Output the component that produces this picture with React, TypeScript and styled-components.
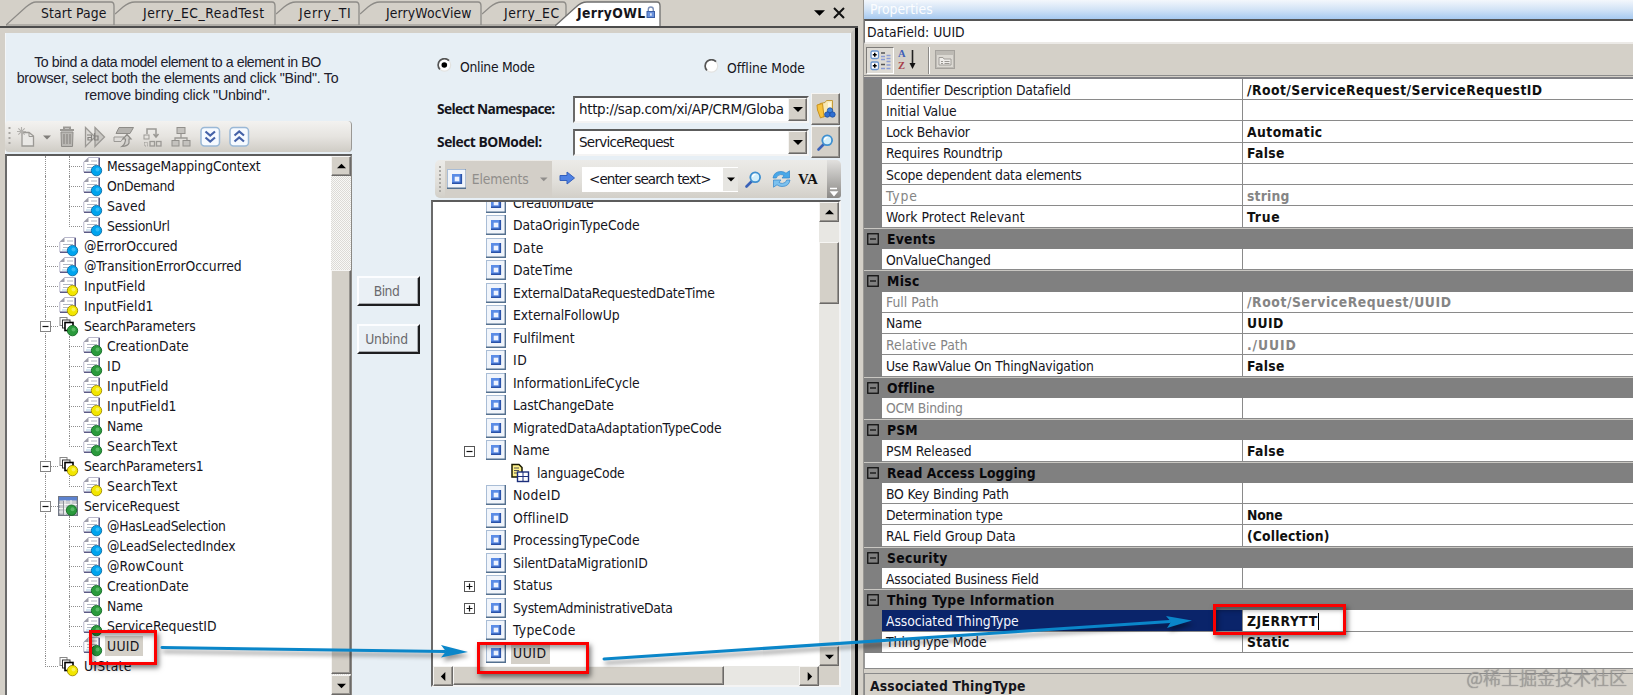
import React, { useLayoutEffect, useRef, useState } from "react";
import styled, { createGlobalStyle, css } from "styled-components";

const face = "#d4d0c8";
const canvas = "#e7eff5";

const GlobalStyle = createGlobalStyle`
  * { box-sizing: border-box; }
  body { margin: 0; background: ${face}; font: 13.8px/18px "DejaVu Sans Condensed", "DejaVu Sans", Tahoma, sans-serif; color: #15151c; }
`;

/* ---------- text that keeps to a given advance width ---------- */
const Run = styled.span<{ $bold?: boolean; $dim?: boolean }>`
  display: inline-block;
  white-space: pre;
  font-weight: ${(p) => (p.$bold ? 700 : 400)};
  ${(p) => p.$dim && "color: #858585;"}
`;

type TextProps = { children: string; w?: number; bold?: boolean; dim?: boolean };

function Text({ children, w, bold, dim }: TextProps) {
  const ref = useRef<HTMLSpanElement>(null);
  const [gap, setGap] = useState(0);
  useLayoutEffect(() => {
    if (w && ref.current) {
      const natural = ref.current.getBoundingClientRect().width;
      setGap((w + 1.6 - natural) / children.length);
    }
  }, [w, children]);
  return (
    <Run ref={ref} $bold={bold} $dim={dim} style={{ letterSpacing: gap }}>
      {children}
    </Run>
  );
}

/* ---------- frame ---------- */
const Screen = styled.div`
  position: relative;
  display: flex;
  width: 1633px;
  height: 695px;
  overflow: hidden;
  background: ${face};
`;
const Designer = styled.div`
  width: 858px;
  height: 695px;
  display: flex;
  flex-direction: column;
`;
const TabStrip = styled.div`
  display: flex;
  height: 28px;
  border-bottom: 2px solid #4c4c4c;
  padding-left: 6px;
  position: relative;
`;
const TabBox = styled.div<{ $w: number; $pad: number; $active?: boolean }>`
  position: relative;
  width: ${(p) => p.$w}px;
  height: 26px;
  padding: 4px 0 0 ${(p) => p.$pad}px;
  display: flex;
  gap: 1px;
  ${(p) => p.$active && "margin-left: -12px;"}
`;
const TabShape = styled.svg`
  position: absolute;
  inset: 0;
`;
const TabLabel = styled.div`
  position: relative;
  display: flex;
  padding-left: 1px;
`;
const StripTools = styled.div`
  display: flex;
  margin-left: auto;
  padding-right: 13px;
  gap: 8px;
  height: 25px;
  align-items: center;
`;
const Document = styled.div`
  flex: 1;
  display: flex;
  background: ${canvas};
  border-top: 5px solid ${face};
  border-left: 5px solid ${face};
  border-right: 4px solid #c4c1bb;
  box-shadow: inset 1px 0 0 #f4f6f8, inset -1px 0 0 #f4f6f8;
  margin-right: 3px;
  outline: 3px solid #060608;
  outline-offset: 0;
  clip-path: inset(0 -3px 0 0);
  min-height: 0;
`;

function Tab({ label, w, pad, tw, active }: { label: string; w: number; pad: number; tw: number; active?: boolean }) {
  const first = label === "Start Page";
  const slope = active
    ? `M0 26 L21 7 Q26 2 32 2 H${w - 4} Q${w - 1} 2 ${w - 1} 6 V26`
    : `M0 ${first ? 25 : 14} L${first ? 20 : 8} 7 Q${first ? 26 : 14} 2 ${first ? 30 : 20} 2 H${w - 4} Q${w - 1} 2 ${w - 1} 6 V25`;
  return (
    <TabBox $w={w} $pad={pad} $active={active}>
      <TabShape width={w} height={26}>
        <path d={slope} fill={active ? "#fff" : "none"} stroke={active ? "#6f6f6f" : "#8d8b87"} strokeWidth="1.3" />
        {!active && <path d={`M0 25H${w}`} stroke="#8d8b87" strokeWidth="1.2" />}
      </TabShape>
      <TabLabel>
        <Text w={tw} bold={active}>{label}</Text>
        {active && (
          <svg width="10" height="16" viewBox="0 0 10 16">
            <path d="M2.300 8V5.500a2.500 2.500 0 0 1 5 0V8" fill="none" stroke="#7b8fb8" strokeWidth="1.400" />
            <rect x="1" y="7.500" width="7.500" height="6" fill="#6a92dc" stroke="#3c5fa6" />
            <rect x="4.200" y="9.300" width="1.400" height="2.400" fill="#fff" />
          </svg>
        )}
      </TabLabel>
    </TabBox>
  );
}

/* ---------- left column ---------- */
const LeftColumn = styled.div`
  width: 347px;
  display: flex;
  flex-direction: column;
`;
const Hint = styled.div`
  height: 88px;
  padding: 21px 2px 0 0;
  display: flex;
  flex-direction: column;
  align-items: center;
  font: 14.2px/16.4px "Liberation Sans", Arial, sans-serif;
  color: #20202c;
`;
const IconBar = styled.div`
  display: flex;
  align-items: center;
  height: 31px;
  padding: 0 0 0 3px;
  border-radius: 4px;
  border-right: 1px solid #9a9894;
  background: linear-gradient(#f3f2f0, #e6e4e0 50%, #cfccc5);
`;
const IconSlot = styled.span<{ $w: number }>`
  width: ${(p) => p.$w}px;
  display: flex;
`;
const sunken = css`
  border: 2px solid #6a6a6a;
  border-top-color: #5c5c5c;
  border-right-color: #f4f4f4;
  border-bottom-color: #f4f4f4;
`;
const TreeBox = styled.div`
  ${sunken};
  border-right: 1px solid #8a8884;
  margin-top: 2px;
  flex: 1;
  display: flex;
  background: #fff;
  min-height: 0;
  border-bottom: 0;
`;
const TreeRows = styled.div`
  flex: 1;
  overflow: hidden;
`;
const LeftRow = styled.div`
  display: flex;
  align-items: center;
  height: 20px;
  padding-left: 38px;
`;
const Guide = styled.span<{ $w: number; $v?: "full" | "half"; $h?: boolean }>`
  position: relative;
  width: ${(p) => p.$w}px;
  height: 20px;
  flex: none;
  &::before {
    content: "";
    position: absolute;
    left: 0;
    top: 0;
    height: ${(p) => (p.$v === "full" ? 20 : p.$v === "half" ? 11 : 0)}px;
    border-left: 1px dotted #8e8e8e;
  }
  &::after {
    content: "";
    position: absolute;
    left: 0;
    top: 10px;
    width: ${(p) => (p.$h ? p.$w - 1 : 0)}px;
    border-top: 1px dotted #8e8e8e;
  }
`;
const ExpanderBox = styled.span`
  position: absolute;
  z-index: 1;
  left: -5px;
  top: 5px;
  display: flex;
`;
const NodeIcon = styled.span<{ $w: number }>`
  width: ${(p) => p.$w}px;
  height: 20px;
  flex: none;
  display: flex;
  svg { overflow: visible; }
`;
const NodeLabel = styled.span<{ $sel?: boolean; $h?: number }>`
  height: ${(p) => p.$h ?? 20}px;
  padding: 0 2px;
  display: flex;
  align-items: center;
  ${(p) => p.$sel && `background: ${face}; padding-right: 3px;`}
`;

function Expander({ plus, color = "#848484" }: { plus?: boolean; color?: string }) {
  return (
    <svg width="11" height="11">
      <rect x=".5" y=".5" width="10" height="10" fill="#fff" stroke={color} />
      <path d={plus ? "M2.5 5.5h6M5.5 2.5v6" : "M2.5 5.5h6"} stroke="#111" strokeWidth="1.2" />
    </svg>
  );
}

type Dot = "blue" | "green" | "yellow";
const dots: Record<Dot, [string, string, string]> = {
  blue: ["#00a4ee", "#0a6ea8", "#5fd0ff"],
  green: ["#2a9a3c", "#136a22", "#7fd08a"],
  yellow: ["#f2e600", "#a08c00", "#fffaa0"],
};

function Ball({ dot, y = 14.6 }: { dot: Dot; y?: number }) {
  const [fill, edge, glow] = dots[dot];
  return (
    <>
      <circle cx="13.500" cy={y} r="5.200" fill={fill} stroke={edge} strokeWidth=".9" />
      <circle cx="14.500" cy={y - 1} r="2" fill={glow} opacity=".55" />
    </>
  );
}

function FieldIcon({ dot }: { dot: Dot }) {
  return (
    <svg width="19" height="20">
      <path d="M5.500 1.500H16.500V16H.8V6Z" fill="#fff" stroke="#b9b8cc" />
      <path d="M16.200 2V15" stroke="#5c5a86" strokeWidth="1.600" />
      <path d="M1 16.300H13" stroke="#5c5a86" strokeWidth="1.400" />
      <path d="M5.500 1.500V6H.8Z" fill="#9d9daa" />
      <path d="M8 5h6M4 8.500h10M4 11.500h6" stroke="#b4b8c4" strokeWidth="1.100" />
      <path d="M3 14h7" stroke="#a9cfe6" strokeWidth="1" />
      <Ball dot={dot} />
    </svg>
  );
}

function NodeStackIcon({ dot }: { dot: Dot }) {
  return (
    <svg width="19" height="20">
      <rect x="1" y="1.500" width="7" height="8" fill="#fff" stroke="#888" />
      <rect x="3.500" y="4" width="7.500" height="8" fill="#fff" stroke="#333" />
      <rect x="6" y="6.500" width="8" height="8" fill="#fff" stroke="#000" strokeWidth="1.600" />
      <Ball dot={dot} y={14.600} />
    </svg>
  );
}

function TableIcon() {
  return (
    <svg width="20" height="20" viewBox="1 0 20 20">
      <rect x=".7" y=".7" width="18.6" height="18.600" fill="#c9ccd0" stroke="#707684" strokeWidth="1.4" />
      <rect x="1" y="1" width="18" height="3.4" fill="#5c82cf" />
      <path d="M1 8.5h18M1 12.500h18M1 16h18M7 4v15M13 4v15" stroke="#f5f5f5" strokeWidth="1" />
      <path d="M5.500 5v14" stroke="#8c9098" />
      <Ball dot="green" y={14.200} />
    </svg>
  );
}

type LNode = { t: string; w: number; l: 1 | 2; i: Dot; kind?: "stack" | "table"; open?: boolean; last?: boolean; sel?: boolean };
const leftNodes: LNode[] = [
  { t: "MessageMappingContext", w: 152, l: 2, i: "blue" },
  { t: "OnDemand", w: 66, l: 2, i: "blue" },
  { t: "Saved", w: 37, l: 2, i: "blue" },
  { t: "SessionUrl", w: 61, l: 2, i: "blue", last: true },
  { t: "@ErrorOccured", w: 92, l: 1, i: "blue" },
  { t: "@TransitionErrorOccurred", w: 156, l: 1, i: "blue" },
  { t: "InputField", w: 60, l: 1, i: "yellow" },
  { t: "InputField1", w: 68, l: 1, i: "yellow" },
  { t: "SearchParameters", w: 110, l: 1, i: "green", kind: "stack", open: true },
  { t: "CreationDate", w: 80, l: 2, i: "green" },
  { t: "ID", w: 13, l: 2, i: "green" },
  { t: "InputField", w: 60, l: 2, i: "yellow" },
  { t: "InputField1", w: 68, l: 2, i: "yellow" },
  { t: "Name", w: 34, l: 2, i: "green" },
  { t: "SearchText", w: 69, l: 2, i: "green", last: true },
  { t: "SearchParameters1", w: 118, l: 1, i: "yellow", kind: "stack", open: true },
  { t: "SearchText", w: 69, l: 2, i: "yellow", last: true },
  { t: "ServiceRequest", w: 94, l: 1, i: "green", kind: "table", open: true },
  { t: "@HasLeadSelection", w: 117, l: 2, i: "blue" },
  { t: "@LeadSelectedIndex", w: 127, l: 2, i: "blue" },
  { t: "@RowCount", w: 75, l: 2, i: "blue" },
  { t: "CreationDate", w: 80, l: 2, i: "green" },
  { t: "Name", w: 34, l: 2, i: "green" },
  { t: "ServiceRequestID", w: 108, l: 2, i: "green" },
  { t: "UUID", w: 31, l: 2, i: "green", last: true, sel: true },
  { t: "UIState", w: 46, l: 1, i: "yellow", kind: "stack", last: true },
];

function LeftNode({ n }: { n: LNode }) {
  return (
    <LeftRow>
      {n.l === 2 && <Guide $w={24} $v="full" />}
      <Guide $w={14} $v={n.last ? "half" : "full"} $h>
        {n.open && <ExpanderBox><Expander /></ExpanderBox>}
      </Guide>
      <NodeIcon $w={n.l === 1 ? 23 : 22}>
        {n.kind === "stack" ? <NodeStackIcon dot={n.i} /> : n.kind === "table" ? <TableIcon /> : <FieldIcon dot={n.i} />}
      </NodeIcon>
      <NodeLabel $sel={n.sel}><Text w={n.w}>{n.t}</Text></NodeLabel>
    </LeftRow>
  );
}

/* ---------- scroll bars ---------- */
const VBar = styled.div<{ $dither?: boolean }>`
  width: 20px;
  flex: none;
  display: flex;
  flex-direction: column;
  background: ${(p) => (p.$dither ? "repeating-conic-gradient(#dcdad6 0 25%, #f8f8f6 0 50%) 0 0 / 2px 2px" : "#e8e7e3")};
`;
const HBar = styled.div`
  height: 19px;
  display: flex;
  background: #e8e7e3;
`;
const raised = css`
  background: ${face};
  border: 1px solid;
  border-color: #f6f5f3 #6c6a68 #6c6a68 #f6f5f3;
  box-shadow: inset -1px -1px 0 #96938e;
`;
const ScrollBtn = styled.span`
  ${raised};
  width: 20px;
  height: 20px;
  flex: none;
  display: flex;
  align-items: center;
  justify-content: center;
`;
const VThumb = styled.span<{ $top: number; $h: number }>`
  ${raised};
  margin-top: ${(p) => p.$top}px;
  height: ${(p) => p.$h}px;
  flex: none;
`;
const HThumb = styled.span<{ $w: number }>`
  ${raised};
  width: ${(p) => p.$w}px;
`;
const ScrollCorner = styled.span`
  width: 20px;
  background: ${face};
`;
const Push = styled.span`
  flex: 1;
`;

function Tri({ dir, size = 9, color = "#000" }: { dir: "up" | "down" | "left" | "right"; size?: number; color?: string }) {
  const d = { up: "M0 7 5 2 10 7Z", down: "M0 3 5 8 10 3Z", left: "M7 0 2 5 7 10Z", right: "M3 0 8 5 3 10Z" }[dir];
  return <svg width={size} height={size} viewBox="0 0 10 10"><path d={d} fill={color} /></svg>;
}

/* ---------- binding buttons ---------- */
const BindColumn = styled.div`
  width: 79px;
  padding: 243px 0 0 5px;
  display: flex;
  flex-direction: column;
  gap: 18px;
`;
const Button = styled.button`
  width: 63px;
  height: 30px;
  padding: 0 4px 0 0;
  font: inherit;
  color: #6a6a6e;
  background: #eaf0f5;
  border: 2px solid;
  border-color: #fcfdff #1e1e20 #1e1e20 #fcfdff;
  box-shadow: inset -1px -1px 0 #a7aaae;
`;

/* ---------- browser column ---------- */
const Browser = styled.div`
  width: 416px;
  display: flex;
  flex-direction: column;
  padding-top: 25px;
`;
const Radios = styled.div`
  display: flex;
  height: 20px;
  padding-left: 6px;
`;
const Radio = styled.label<{ $w: number; $down?: boolean }>`
  display: flex;
  width: ${(p) => p.$w}px;
  gap: 8px;
  ${(p) => p.$down && "margin-top: 1px;"}
`;
const FormRow = styled.div<{ $top: number }>`
  display: flex;
  margin-top: ${(p) => p.$top}px;
  height: 32px;
  padding-left: 5px;
  align-items: center;
`;
const FormLabel = styled.div`
  width: 137px;
  padding-left: 1px;
  font-family: "Open Sans", "Noto Sans", sans-serif;
  line-height: 16px;
`;
const Combo = styled.div`
  ${sunken};
  width: 236px;
  height: 27px;
  display: flex;
  background: #fff;
  align-items: center;
  padding-left: 4px;
  font-family: "DejaVu Sans", Verdana, sans-serif;
  font-size: 13.500px;
  overflow: hidden;
`;
const DropBtn = styled.span`
  ${raised};
  margin-left: auto;
  width: 19px;
  height: 23px;
  display: flex;
  align-items: center;
  justify-content: center;
`;
const SideBtn = styled.span`
  ${raised};
  margin-left: 2px;
  width: 29px;
  height: 32px;
  display: flex;
  align-items: center;
  justify-content: center;
`;
const SearchBar = styled.div`
  display: flex;
  align-items: center;
  height: 38px;
  width: 406px;
  margin: 2px 0 0 4px;
  background: linear-gradient(#ecebe8, #e0ded9 60%, #d2cfc8);
  border-radius: 5px;
`;
const Grip = styled.span`
  width: 3px;
  margin: 0 3px 0 4px;
  border-left: 2px dotted #aaa8a4;
  height: 26px;
`;
const ElementsBtn = styled.span`
  display: flex;
  align-items: center;
  width: 107px;
  height: 36px;
  background: #d3cfc8;
  padding: 0 4px 0 2px;
  color: #908e8b;
  gap: 6px;
`;
const ArrowSlot = styled.span`
  margin-top: -2px;
  height: 16px;
  display: flex;
`;
const SearchField = styled.span`
  display: flex;
  align-items: center;
  width: 156px;
  height: 25px;
  margin: 0 7px 0 6px;
  padding-left: 7px;
  background: #fff;
  font-family: "DejaVu Sans", Verdana, sans-serif;
  font-size: 13.500px;
`;
const SearchDrop = styled.span`
  margin-left: auto;
  width: 15px;
  height: 23px;
  background: #e6e5e1;
  display: flex;
  align-items: center;
  justify-content: center;
`;
const RefreshSlot = styled.span`
  margin-left: 10px;
  display: flex;
`;
const VaLabel = styled.span`
  font: 700 15px/18px "Liberation Serif", serif;
  color: #111;
  margin-left: 7px;
`;
const Overflow = styled.span`
  margin-left: auto;
  width: 14px;
  height: 38px;
  border-radius: 0 5px 3px 0;
  background: linear-gradient(#e2e1df, #8b8986);
  display: flex;
  align-items: flex-end;
  justify-content: center;
`;
const ModelTree = styled.div`
  ${sunken};
  width: 410px;
  height: 487px;
  margin-top: 2px;
  background: #fff;
  display: flex;
  flex-direction: column;
`;
const ModelBody = styled.div`
  display: flex;
  height: 464px;
`;
const ModelRows = styled.div`
  flex: 1;
  overflow: hidden;
  height: 464px;
`;
const ModelList = styled.div`
  margin-top: -10.3px;
`;
const ModelRow = styled.div<{ $child?: boolean }>`
  height: 22.49px;
  display: flex;
  align-items: center;
  padding-left: ${(p) => (p.$child ? 78 : 31)}px;
`;
const ModelToggle = styled.span`
  width: 22px;
  display: flex;
  padding-top: 2px;
`;

function ElementIcon() {
  return (
    <svg width="20" height="20">
      <rect x=".5" y=".5" width="19" height="19" fill="#f1f5fb" stroke="#a9bdd6" />
      <path d="M0 19.300H20M19.300 0V20" stroke="#54708f" strokeWidth="1.4" />
      <rect x="5" y="5" width="10" height="10" fill="#5b8ce6" />
      <path d="M14.300 5V14.300H5" fill="none" stroke="#2a52a8" strokeWidth="1.600" />
      <rect x="7.700" y="7.700" width="4.600" height="4.600" fill="#eef3ff" />
    </svg>
  );
}

function LanguageIcon() {
  return (
    <svg width="18" height="20">
      <path d="M1 1.500H8L11 4.500V14H1Z" fill="#fdf08a" stroke="#1a1a00" strokeWidth="1.500" />
      <path d="M3 5h5M3 7.500h5M3 10h3" stroke="#555" />
      <rect x="6.500" y="9" width="11" height="9.500" fill="#fff" stroke="#1c2f7c" strokeWidth="1.400" />
      <path d="M7 13.500h10M12 9v9" stroke="#1c2f7c" />
    </svg>
  );
}

type MNode = [string, number, ("+" | "-" | "c" | "s")?];
const modelNodes: MNode[] = [
  ["CreationDate", 79], ["DataOriginTypeCode", 125], ["Date", 29], ["DateTime", 58],
  ["ExternalDataRequestedDateTime", 200], ["ExternalFollowUp", 105], ["Fulfilment", 60], ["ID", 13],
  ["InformationLifeCycle", 125], ["LastChangeDate", 99], ["MigratedDataAdaptationTypeCode", 207],
  ["Name", 35, "-"], ["languageCode", 86, "c"], ["NodeID", 46], ["OfflineID", 54],
  ["ProcessingTypeCode", 125], ["SilentDataMigrationID", 133], ["Status", 38, "+"],
  ["SystemAdministrativeData", 158, "+"], ["TypeCode", 61], ["UUID", 32, "s"],
];

function Magnifier() {
  return (
    <svg width="17" height="17" viewBox="0 0 17 17">
      <path d="M1.500 15.500 6.500 10.500" stroke="#3a62b8" strokeWidth="2.600" strokeLinecap="round" />
      <circle cx="10.200" cy="6.300" r="4.900" fill="#d3effb" stroke="#3f90d0" strokeWidth="1.800" />
      <path d="M7.500 6a3 3 0 0 1 3-2.600" stroke="#fff" strokeWidth="1.400" fill="none" />
    </svg>
  );
}

function FolderIcon() {
  return (
    <svg width="20" height="20" viewBox="0 0 20 20">
      <path d="M4 4.500 9 3.500 10.500 1.500H16.500V15L7 18Z" fill="#f8e9b4" stroke="#c49b3a" />
      <path d="M1 6 6.500 4.500 8 17.500 4.500 19 1.500 11Z" fill="#f7c23c" stroke="#c9921c" />
      <path d="M12 3.500H15V10H12Z" fill="#fff8dc" />
      <circle cx="14" cy="11.500" r="2.700" fill="#3f86e0" stroke="#1d4ea0" strokeWidth=".8" />
      <circle cx="11.300" cy="15.500" r="2.700" fill="#2f6fd2" stroke="#1d4ea0" strokeWidth=".8" />
      <circle cx="16.500" cy="15.500" r="2.700" fill="#2f6fd2" stroke="#1d4ea0" strokeWidth=".8" />
    </svg>
  );
}

function RefreshIcon() {
  return (
    <svg width="19" height="18" viewBox="0 0 19 18">
      <path d="M1 8Q2 1.5 9 1.5Q12 1.5 14 3.2L17.5.8V8H10L12 5.700Q10.500 4.500 8.500 4.600Q5 5 4.300 8Z" fill="#49a8e8" stroke="#2f84cc" strokeWidth=".7" />
      <path d="M18 10Q17 16.500 10 16.500Q7 16.500 5 14.800L1.500 17.200V10H9L7 12.300Q8.500 13.500 10.500 13.400Q14 13 14.700 10Z" fill="#7cc1ee" stroke="#2f84cc" strokeWidth=".7" />
    </svg>
  );
}

function RadioDot({ on }: { on?: boolean }) {
  return (
    <svg width="15" height="15">
      <circle cx="7.500" cy="7" r="6.200" fill="#fff" stroke="#e2e2e0" strokeWidth="1.200" />
      <path d="M2.900 11.400A6.200 6.200 0 0 1 12 2.600" fill="none" stroke="#555" strokeWidth="1.700" />
      {on && <circle cx="7.300" cy="7" r="2.800" fill="#000" />}
    </svg>
  );
}

/* ---------- toolbar drawings on the left ---------- */
const g = "#9b9995";
function NewIcon() {
  return (
    <svg width="20" height="22">
      <path d="M6 6.500H13L17.500 10V20H6Z" fill="#e9e8e5" stroke={g} strokeWidth="1.300" />
      <path d="M13 6.500V10.500H17.500" fill="none" stroke={g} />
      <path d="M5.500 1V10M1 5.500H10M2.300 2.300 8.700 8.700M8.700 2.300 2.300 8.700" stroke="#b2b0ac" strokeWidth="1.100" />
    </svg>
  );
}
function TrashIcon() {
  return (
    <svg width="16" height="22">
      <path d="M1 4H15M5 3.500V1.500H11V3.500" stroke={g} strokeWidth="2" fill="none" />
      <path d="M2 6H14L13.500 20.500H2.500Z" fill="#b9b7b3" stroke="#8e8c88" />
      <path d="M5 8V18M8 8V18M11 8V18" stroke="#8e8c88" strokeWidth="1.300" />
    </svg>
  );
}
function RenameIcon() {
  return (
    <svg width="22" height="22">
      <path d="M11 1.500 20.500 11 11 20.500Z" fill="#c9c7c3" stroke={g} strokeWidth="1.300" />
      <path d="M1.500 1.500 11 11 1.500 20.500Z" fill="#dcdad6" stroke={g} strokeWidth="1.300" />
      <path d="M3 9h4.500v5H4v-2.500h3.500M10.500 7v7h3.500v-4h-3.500" fill="none" stroke="#84827f" strokeWidth="1.200" />
    </svg>
  );
}
function ImportIcon() {
  return (
    <svg width="22" height="22">
      <path d="M6 1.500H20.500L17 7.500H3Z" fill="#b5b3af" stroke="#8e8c88" />
      <path d="M1 11H11L8 15.500H1Z" fill="#dddbd8" stroke={g} />
      <path d="M10 13 14 8.500 18 13H16V17Q15 20 9 20.500Q12.500 18 12.500 13Z" fill="#d2d0cc" stroke="#8e8c88" strokeWidth="1.200" />
    </svg>
  );
}
function MoveIcon() {
  return (
    <svg width="20" height="22">
      <path d="M4 8V3H13V10M10.500 8 13 11 15.500 8" fill="none" stroke={g} strokeWidth="1.500" />
      <rect x="1" y="9" width="5" height="4" fill="none" stroke={g} />
      <rect x="1.500" y="16.500" width="3" height="3.500" fill="none" stroke={g} strokeDasharray="1 1" />
      <rect x="7" y="15.500" width="4.500" height="4.500" fill="none" stroke={g} strokeWidth="1.300" />
      <rect x="13.500" y="15.500" width="4.500" height="4.500" fill="none" stroke={g} strokeWidth="1.300" />
    </svg>
  );
}
function OrgIcon() {
  return (
    <svg width="20" height="22">
      <path d="M10 8V12M4 15V12H16V15" fill="none" stroke={g} strokeWidth="1.300" />
      <rect x="6" y="1.500" width="8" height="6" fill="#c4c2be" stroke="#92908c" />
      <rect x="1" y="14.500" width="7" height="5.500" fill="#c4c2be" stroke="#92908c" />
      <rect x="12" y="14.500" width="7" height="5.500" fill="#c4c2be" stroke="#92908c" />
    </svg>
  );
}
function ChevronsIcon({ up }: { up?: boolean }) {
  return (
    <svg width="21" height="22">
      <rect x="1" y="1.500" width="18.500" height="18.500" rx="3.500" fill="#f6faff" stroke="#9ab8d6" strokeWidth="1.500" />
      <path d={up ? "M5.500 9.500 10.200 5.500 15 9.500M5.500 15.500 10.200 11.500 15 15.500" : "M5.500 5.500 10.200 9.500 15 5.500M5.500 11.500 10.200 15.500 15 11.500"} fill="none" stroke="#4562a8" strokeWidth="2.200" />
    </svg>
  );
}

/* ---------- property panel ---------- */
const Divider = styled.div`
  width: 5px;
  background: ${face};
`;
const Panel = styled.div`
  flex: 1;
  display: flex;
  flex-direction: column;
  border-left: 1px solid #9a9894;
`;
const PanelTitle = styled.div`
  height: 19px;
  padding: 0 0 0 6px;
  line-height: 18px;
  color: #fbfdff;
  background: linear-gradient(#f3f7fc, #d2e3f6 50%, #a6c9f0);
`;
const ObjectCombo = styled.div`
  height: 25px;
  border-top: 2px solid #555;
  border-bottom: 2px solid #eceae7;
  border-left: 1px solid #777;
  background: #fff;
  padding-left: 2px;
  line-height: 23px;
`;
const PanelTools = styled.div`
  display: flex;
  align-items: center;
  height: 31px;
  padding: 2px 0 0 2px;
`;
const Pressed = styled.span`
  width: 28px;
  height: 27px;
  border: 1px solid;
  border-color: #7d7b78 #fff #fff #7d7b78;
  background: #dedbd5;
  display: flex;
  align-items: center;
  justify-content: center;
`;
const SortIcon = styled.span`
  display: flex;
  align-items: center;
  margin-left: 4px;
  gap: 2px;
`;
const SortLetters = styled.span`
  display: flex;
  flex-direction: column;
  font: 700 10.500px/12px "Liberation Serif", serif;
  b { color: #3f5fb8; }
  i { color: #a8404a; font-style: normal; }
`;
const ToolGap = styled.span`
  width: 7px;
  height: 27px;
  margin-left: 11px;
  border-left: 1px solid #8c8a87;
  box-shadow: inset 1px 0 0 #fff;
`;
const Grid = styled.div`
  height: 579px;
  border-top: 1px solid #8b8b8b;
  padding-top: 1px;
  background: ${face};
  display: flex;
  flex-direction: column;
`;
const GridRows = styled.div`
  flex: 1;
  display: grid;
  grid-template-rows: repeat(27, minmax(0, 1fr));
  background: #808080;
  border-top: 2px solid #808085;
`;
const Item = styled.div`
  display: grid;
  grid-template-columns: 361px 1fr;
  margin-left: 18px;
  background: #fff;
  border-bottom: 1px solid #8a8a8a;
`;
const NameCell = styled.div<{ $sel?: boolean }>`
  padding: 1px 0 0 4px;
  border-right: 1px solid #8a8a8a;
  display: flex;
  align-items: center;
  ${(p) => p.$sel && "background: #0a246a; color: #f4f6ff;"}
`;
const ValueCell = styled.div`
  padding: 1px 0 0 4px;
  display: flex;
  align-items: center;
  color: #101010;
`;
const Caret = styled.span`
  width: 1px;
  height: 17px;
  background: #000;
`;
const Category = styled.div`
  display: flex;
  align-items: center;
  gap: 8px;
  padding-left: 3px;
  border-top: 1px solid #c9c7c2;
  color: #08080c;
  line-height: 18px;
`;
const GridRest = styled.div`
  height: 16px;
  background: #fff;
  border-left: 1px solid #999;
  border-bottom: 1px solid #8a8a8a;
`;
const HelpPane = styled.div`
  margin-top: 4px;
  flex: 1;
  border-top: 1px solid #8a8a8a;
  border-left: 1px solid #8a8a8a;
  padding: 3px 0 0 5px;
`;

type Prop = { n: string; nw: number; v?: string; vw?: number; dim?: boolean; sel?: boolean };
const rows: (Prop | { cat: string; w: number })[] = [
  { n: "Identifier Description Datafield", nw: 183, v: "/Root/ServiceRequest/ServiceRequestID", vw: 294 },
  { n: "Initial Value", nw: 69 },
  { n: "Lock Behavior", nw: 82, v: "Automatic", vw: 74 },
  { n: "Requires Roundtrip", nw: 115, v: "False", vw: 36 },
  { n: "Scope dependent data elements", nw: 194 },
  { n: "Type", nw: 30, v: "string", vw: 41, dim: true },
  { n: "Work Protect Relevant", nw: 137, v: "True", vw: 32 },
  { cat: "Events", w: 47 },
  { n: "OnValueChanged", nw: 103 },
  { cat: "Misc", w: 31 },
  { n: "Full Path", nw: 51, v: "/Root/ServiceRequest/UUID", vw: 203, dim: true },
  { n: "Name", nw: 34, v: "UUID", vw: 35 },
  { n: "Relative Path", nw: 80, v: "./UUID", vw: 48, dim: true },
  { n: "Use RawValue On ThingNavigation", nw: 206, v: "False", vw: 36 },
  { cat: "Offline", w: 45 },
  { n: "OCM Binding", nw: 75, dim: true },
  { cat: "PSM", w: 29 },
  { n: "PSM Released", nw: 84, v: "False", vw: 36 },
  { cat: "Read Access Logging", w: 147 },
  { n: "BO Key Binding Path", nw: 121 },
  { n: "Determination type", nw: 115, v: "None", vw: 34 },
  { n: "RAL Field Group Data", nw: 128, v: "(Collection)", vw: 81 },
  { cat: "Security", w: 59 },
  { n: "Associated Business Field", nw: 151 },
  { cat: "Thing Type Information", w: 166 },
  { n: "Associated ThingType", nw: 131, v: "ZJERRYTT", vw: 69, sel: true },
  { n: "ThingType Mode", nw: 99, v: "Static", vw: 41 },
];

/* ---------- annotations over the windows ---------- */
const Mark = styled.span<{ $x: number; $y: number; $w: number; $h: number }>`
  position: absolute;
  left: ${(p) => p.$x}px;
  top: ${(p) => p.$y}px;
  width: ${(p) => p.$w}px;
  height: ${(p) => p.$h}px;
  border: 3px solid #fb0000;
  box-shadow: 2px 3px 5px rgba(0, 0, 0, 0.5), inset 2px 3px 5px rgba(0, 0, 0, 0.4);
`;
const Arrows = styled.svg`
  position: absolute;
  left: 0;
  top: 0;
  filter: drop-shadow(2px 4px 2px rgba(0, 0, 0, 0.4));
`;
const Watermark = styled.span`
  position: absolute;
  right: 6px;
  top: 663px;
  font: 300 18px/28px "Noto Sans CJK SC", sans-serif;
  color: #a4a29e;
  text-shadow: 0 0 1px #6f6d72;
`;

export default function App() {
  return (
    <Screen>
      <GlobalStyle />
      <Designer>
        <TabStrip>
          <Tab label="Start Page" w={109} pad={34} tw={64} />
          <Tab label="Jerry_EC_ReadTest" w={161} pad={27} tw={120} />
          <Tab label="Jerry_TI" w={84} pad={22} tw={51} />
          <Tab label="JerryWocView" w={122} pad={25} tw={84} />
          <Tab label="Jerry_EC" w={85} pad={21} tw={54} />
          <Tab label="JerryOWL" w={106} pad={21} tw={67} active />
          <StripTools>
            <Tri dir="down" size={11} />
            <svg width="12" height="12"><path d="M1 1 11 11M11 1 1 11" stroke="#111" strokeWidth="2" /></svg>
          </StripTools>
        </TabStrip>
        <Document>
          <LeftColumn>
            <Hint>
              <Text w={285}>To bind a data model element to a element in BO</Text>
              <Text w={320}>{'browser, select both the elements and click "Bind". To'}</Text>
              <Text w={184}>{'remove binding click "Unbind".'}</Text>
            </Hint>
            <IconBar>
              <svg width="8" height="22"><path d="M1.500 1V21" stroke="#a7a5a1" strokeWidth="2" strokeDasharray="2 3" /></svg>
              <IconSlot $w={27}><NewIcon /></IconSlot>
              <IconSlot $w={16}><Tri dir="down" size={8} color="#807e7b" /></IconSlot>
              <IconSlot $w={25}><TrashIcon /></IconSlot>
              <IconSlot $w={29}><RenameIcon /></IconSlot>
              <IconSlot $w={30}><ImportIcon /></IconSlot>
              <IconSlot $w={28}><MoveIcon /></IconSlot>
              <IconSlot $w={29}><OrgIcon /></IconSlot>
              <IconSlot $w={29}><ChevronsIcon /></IconSlot>
              <ChevronsIcon up />
            </IconBar>
            <TreeBox>
              <TreeRows>
                {leftNodes.map((n, i) => <LeftNode key={i} n={n} />)}
              </TreeRows>
              <VBar $dither>
                <ScrollBtn><Tri dir="up" /></ScrollBtn>
                <VThumb $top={94} $h={404} />
                <Push />
                <ScrollBtn><Tri dir="down" /></ScrollBtn>
              </VBar>
            </TreeBox>
          </LeftColumn>
          <BindColumn>
            <Button><Text w={24}>Bind</Text></Button>
            <Button><Text w={41}>Unbind</Text></Button>
          </BindColumn>
          <Browser>
            <Radios>
              <Radio $w={267}><RadioDot on /><Text w={73}>Online Mode</Text></Radio>
              <Radio $w={120} $down><RadioDot /><Text w={76}>Offline Mode</Text></Radio>
            </Radios>
            <FormRow $top={15}>
              <FormLabel><Text w={116} bold>Select Namespace:</Text></FormLabel>
              <Combo><Text w={203}>http://sap.com/xi/AP/CRM/Globa</Text><DropBtn><Tri dir="down" size={10} /></DropBtn></Combo>
              <SideBtn><FolderIcon /></SideBtn>
            </FormRow>
            <FormRow $top={1}>
              <FormLabel><Text w={103} bold>Select BOModel:</Text></FormLabel>
              <Combo><Text w={93}>ServiceRequest</Text><DropBtn><Tri dir="down" size={10} /></DropBtn></Combo>
              <SideBtn><Magnifier /></SideBtn>
            </FormRow>
            <SearchBar>
              <Grip />
              <ElementsBtn>
                <ElementIcon />
                <Text w={55}>Elements</Text>
                <Push />
                <Tri dir="down" size={8} color="#908e8b" />
              </ElementsBtn>
              <ArrowSlot>
                <svg width="24" height="16">
                  <path d="M8 5.500H15V2L22.500 8 15 14V10.500H8Z" fill="#4f82e4" stroke="#3560bc" />
                </svg>
              </ArrowSlot>
              <SearchField>
                <Text w={120}>{"<enter search text>"}</Text>
                <SearchDrop><Tri dir="down" size={8} /></SearchDrop>
              </SearchField>
              <Magnifier />
              <RefreshSlot><RefreshIcon /></RefreshSlot>
              <VaLabel>VA</VaLabel>
              <Overflow>
                <svg width="10" height="12"><path d="M1 2.500H8M2 6 8 6 5 9.500Z" stroke="#fff" strokeWidth="1.300" fill="#fff" /></svg>
              </Overflow>
            </SearchBar>
            <ModelTree>
              <ModelBody>
                <ModelRows>
                  <ModelList>
                    {modelNodes.map(([t, w, k]) => (
                      <ModelRow key={t} $child={k === "c"}>
                        {k !== "c" && (
                          <ModelToggle>{(k === "+" || k === "-") && <Expander plus={k === "+"} color="#555" />}</ModelToggle>
                        )}
                        <NodeIcon $w={k === "c" ? 24 : 25}>{k === "c" ? <LanguageIcon /> : <ElementIcon />}</NodeIcon>
                        <NodeLabel $sel={k === "s"} $h={22}><Text w={w}>{t}</Text></NodeLabel>
                      </ModelRow>
                    ))}
                  </ModelList>
                </ModelRows>
                <VBar>
                  <ScrollBtn><Tri dir="up" /></ScrollBtn>
                  <VThumb $top={20} $h={62} />
                  <Push />
                  <ScrollBtn><Tri dir="down" /></ScrollBtn>
                </VBar>
              </ModelBody>
              <HBar>
                <ScrollBtn><Tri dir="left" /></ScrollBtn>
                <HThumb $w={271} />
                <Push />
                <ScrollBtn><Tri dir="right" /></ScrollBtn>
                <ScrollCorner />
              </HBar>
            </ModelTree>
          </Browser>
        </Document>
      </Designer>
      <Divider />
      <Panel>
        <PanelTitle><Text w={61}>Properties</Text></PanelTitle>
        <ObjectCombo><Text w={96}>DataField: UUID</Text></ObjectCombo>
        <PanelTools>
          <Pressed>
            <svg width="21" height="21">
              <rect x="1" y="1" width="7.500" height="7.500" rx="1.500" fill="#fff" stroke="#6a94cc" strokeWidth="1.300" />
              <rect x="1" y="12" width="7.500" height="7.500" rx="1.500" fill="#fff" stroke="#6a94cc" strokeWidth="1.300" />
              <path d="M2.800 4.750H6.700M4.750 2.800V6.700M2.800 15.750H6.700M4.750 13.800V17.700" stroke="#000" strokeWidth="1.500" />
              <path d="M11 3H15M11 14.500H15" stroke="#555" strokeWidth="1.400" />
              <path d="M11 6.500h4M11 9.500h4M11 18.500h4M16.500 5.500h4M16.500 8.500h4M16.500 11.500h4M16.500 15h4M16.500 18.500h4" stroke="#8a9cd4" strokeWidth="1.300" />
            </svg>
          </Pressed>
          <SortIcon>
            <SortLetters><b>A</b><i>Z</i></SortLetters>
            <svg width="9" height="20"><path d="M4.500 0V15" stroke="#222" strokeWidth="1.600" /><path d="M1.500 13H7.500L4.500 19Z" fill="#111" /></svg>
          </SortIcon>
          <ToolGap />
          <svg width="20" height="20">
            <rect x=".5" y=".5" width="19" height="18" fill="#bdbab4" stroke="#a5a29d" />
            <rect x="2" y="5" width="16" height="12" fill="#dbd8d2" />
            <path d="M4 7.500H8L9 9H16V15H4Z" fill="#efedea" stroke="#a09d98" />
            <path d="M6 11.500h2M9.500 11.500h5M6 13.500h2M9.500 13.500h5" stroke="#9a9792" />
          </svg>
        </PanelTools>
        <Grid>
          <GridRows>
            {rows.map((r, i) =>
              "cat" in r ? (
                <Category key={i}>
                  <svg width="12" height="12">
                    <rect x=".75" y=".75" width="10.500" height="10.500" fill="none" stroke="#111" strokeWidth="1.300" />
                    <path d="M3 6H9" stroke="#111" strokeWidth="1.300" />
                  </svg>
                  <Text w={r.w} bold>{r.cat}</Text>
                </Category>
              ) : (
                <Item key={i}>
                  <NameCell $sel={r.sel}><Text w={r.nw} dim={r.dim}>{r.n}</Text></NameCell>
                  <ValueCell>
                    {r.v && <Text w={r.vw} bold dim={r.dim}>{r.v}</Text>}
                    {r.sel && <Caret />}
                  </ValueCell>
                </Item>
              )
            )}
          </GridRows>
        </Grid>
        <GridRest />
        <HelpPane><Text w={154} bold>Associated ThingType</Text></HelpPane>
      </Panel>
      <Mark $x={89} $y={630} $w={68} $h={35} />
      <Mark $x={477} $y={642} $w={112} $h={32} />
      <Mark $x={1213} $y={604} $w={133} $h={31} />
      <Arrows width="1633" height="695">
        <g fill="#0a86c9" stroke="#0a86c9">
          <path d="M162 647.500 445 651.500M604 659 1170 621.500" strokeWidth="3" strokeLinecap="round" />
          <path d="M441 645 468 652 441 657.500 446 651.500Z" stroke="none" />
          <path d="M1166 616 1192 620.500 1167 628 1171 621.800Z" stroke="none" />
        </g>
      </Arrows>
      <Watermark>@稀土掘金技术社区</Watermark>
    </Screen>
  );
}
